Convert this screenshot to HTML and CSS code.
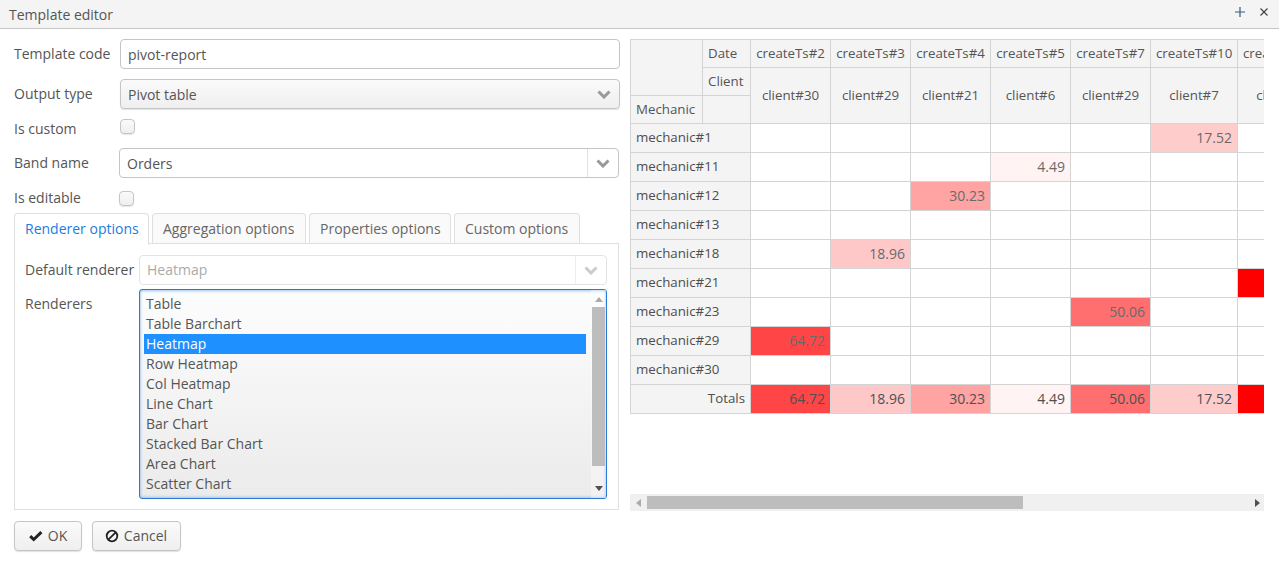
FILE: index.html
```html
<!DOCTYPE html>
<html>
<head>
  <meta charset="utf-8">
  <title>Template editor</title>
  <link rel="stylesheet" href="styles.css">
</head>
<body>
  <header class="window-header">
    <span class="window-title">Template editor</span>
    <span class="window-actions">
      <svg class="icon-plus" width="10" height="10" viewBox="0 0 10 10"><path d="M5 0v10M0 5h10"/></svg>
      <svg class="icon-close" width="10" height="10" viewBox="0 0 10 10"><path d="M1.5 1.5l7 7M8.5 1.5l-7 7"/></svg>
    </span>
  </header>

  <main class="window-body">
    <section class="editor">
      <div class="form-row row-input">
        <label class="label">Template code</label>
        <div class="field">pivot-report</div>
      </div>
      <div class="form-row row-input">
        <label class="label">Output type</label>
        <div class="field field-native">
          <span class="grow">Pivot table</span>
          <svg class="chevron" width="14" height="9" viewBox="0 0 14 9"><path d="M1.5 1.5L7 7l5.500-5.500"/></svg>
        </div>
      </div>
      <div class="form-row row-check row-custom">
        <label class="label">Is custom</label>
        <span class="checkbox"></span>
      </div>
      <div class="form-row row-input row-band">
        <label class="label">Band name</label>
        <div class="field field-combo">
          <span class="grow">Orders</span>
          <span class="combo-btn">
            <svg class="chevron" width="14" height="9" viewBox="0 0 14 9"><path d="M1.5 1.5L7 7l5.500-5.500"/></svg>
          </span>
        </div>
      </div>
      <div class="form-row row-check row-editable">
        <label class="label">Is editable</label>
        <span class="checkbox"></span>
      </div>

      <nav class="tabs">
        <span class="tab tab-active">Renderer options</span>
        <span class="tab">Aggregation options</span>
        <span class="tab">Properties options</span>
        <span class="tab">Custom options</span>
      </nav>
      <div class="tab-body">
        <div class="tab-row">
          <label class="tab-label">Default renderer</label>
          <div class="field field-combo field-disabled">
            <span class="grow">Heatmap</span>
            <span class="combo-btn">
              <svg class="chevron" width="14" height="9" viewBox="0 0 14 9"><path d="M1.5 1.5L7 7l5.500-5.500"/></svg>
            </span>
          </div>
        </div>
        <div class="tab-row tab-row-list">
          <label class="tab-label">Renderers</label>
          <div class="listbox">
            <ul class="options">
              <li>Table</li>
              <li>Table Barchart</li>
              <li class="selected">Heatmap</li>
              <li>Row Heatmap</li>
              <li>Col Heatmap</li>
              <li>Line Chart</li>
              <li>Bar Chart</li>
              <li>Stacked Bar Chart</li>
              <li>Area Chart</li>
              <li>Scatter Chart</li>
            </ul>
            <div class="vscroll">
              <span class="arrow-up"></span>
              <span class="vthumb"></span>
              <span class="arrow-down"></span>
            </div>
          </div>
        </div>
      </div>

      <div class="buttons">
        <button class="btn btn-ok">
          <svg class="btn-icon" width="14" height="14" viewBox="0 0 14 14"><path class="icon-check" d="M1.200 7.200l3.500 3.300 7.700-7.300"/></svg>
          OK
        </button>
        <button class="btn btn-cancel">
          <svg class="btn-icon" width="14" height="14" viewBox="0 0 14 14"><circle class="icon-ban" cx="7" cy="7" r="5.300"/><path class="icon-ban" d="M3.300 10.700l7.400-7.400"/></svg>
          Cancel
        </button>
      </div>
    </section>

    <section class="report">
      <div class="pivot-wrap">
        <table class="pivot">
          <colgroup>
            <col class="c-axis"><col class="c-attr">
            <col class="c-val"><col class="c-val"><col class="c-val"><col class="c-val"><col class="c-val">
            <col class="c-wide"><col class="c-wide">
          </colgroup>
          <thead>
            <tr>
              <th rowspan="2"></th>
              <th class="left">Date</th>
              <th>createTs#2</th><th>createTs#3</th><th>createTs#4</th><th>createTs#5</th><th>createTs#7</th><th>createTs#10</th><th>createTs#11</th>
            </tr>
            <tr>
              <th class="left">Client</th>
              <th rowspan="2">client#30</th><th rowspan="2">client#29</th><th rowspan="2">client#21</th><th rowspan="2">client#6</th><th rowspan="2">client#29</th><th rowspan="2">client#7</th><th rowspan="2">client#2</th>
            </tr>
            <tr>
              <th class="left">Mechanic</th>
              <th></th>
            </tr>
          </thead>
          <tbody>
            <tr><th class="left" colspan="2">mechanic#1</th><td></td><td></td><td></td><td></td><td></td><td class="heat-17">17.52</td><td></td></tr>
            <tr><th class="left" colspan="2">mechanic#11</th><td></td><td></td><td></td><td class="heat-4">4.49</td><td></td><td></td><td></td></tr>
            <tr><th class="left" colspan="2">mechanic#12</th><td></td><td></td><td class="heat-30">30.23</td><td></td><td></td><td></td><td></td></tr>
            <tr><th class="left" colspan="2">mechanic#13</th><td></td><td></td><td></td><td></td><td></td><td></td><td></td></tr>
            <tr><th class="left" colspan="2">mechanic#18</th><td></td><td class="heat-18">18.96</td><td></td><td></td><td></td><td></td><td></td></tr>
            <tr><th class="left" colspan="2">mechanic#21</th><td></td><td></td><td></td><td></td><td></td><td></td><td class="heat-max"></td></tr>
            <tr><th class="left" colspan="2">mechanic#23</th><td></td><td></td><td></td><td></td><td class="heat-50">50.06</td><td></td><td></td></tr>
            <tr><th class="left" colspan="2">mechanic#29</th><td class="heat-64">64.72</td><td></td><td></td><td></td><td></td><td></td><td></td></tr>
            <tr><th class="left" colspan="2">mechanic#30</th><td></td><td></td><td></td><td></td><td></td><td></td><td></td></tr>
            <tr class="totals"><th class="right" colspan="2">Totals</th><td class="heat-64">64.72</td><td class="heat-18">18.96</td><td class="heat-30">30.23</td><td class="heat-4">4.49</td><td class="heat-50">50.06</td><td class="heat-17">17.52</td><td class="heat-max"></td></tr>
          </tbody>
        </table>
      </div>
      <div class="hscroll">
        <span class="arrow-left"></span>
        <span class="hthumb"></span>
        <span class="arrow-right"></span>
      </div>
    </section>
  </main>
</body>
</html>
```

FILE: styles.css
```css
html, body {
  height: 100%;
  margin: 0;
}
body {
  background: #fff;
  color: #555;
  font-family: "Open Sans", sans-serif;
  font-size: 14px;
  overflow: hidden;
}

/* window chrome */
.window-header {
  display: flex;
  align-items: center;
  justify-content: space-between;
  height: 28px;
  padding: 0 10px 0 9px;
  background: #f4f4f4;
  border-bottom: 1px solid #c5c5c5;
}
.window-title {
  color: #555;
}
.window-actions {
  display: flex;
  gap: 14px;
  margin-top: -4px;
}
.icon-plus path {
  stroke: #2c5f8a;
  stroke-width: 1.2;
  fill: none;
}
.icon-close path {
  stroke: #444;
  stroke-width: 1.2;
  fill: none;
}

.window-body {
  display: flex;
  padding: 10px 15px 0 14px;
  gap: 10px;
}

/* left form */
.editor {
  width: 606px;
  flex: none;
}
.form-row {
  display: flex;
  margin-bottom: 10px;
}
.row-input {
  align-items: center;
  height: 30px;
}
.row-input .label {
  padding-bottom: 2px;
}
.row-check {
  height: 19px;
}
.row-custom .label {
  line-height: 20px;
}
.row-editable {
  height: 20px;
  margin-bottom: 5px;
  line-height: 20px;
}
.row-editable .checkbox {
  margin-top: 3px;
}
.label {
  width: 106px;
  flex: none;
}
.row-band .label,
.row-editable .label {
  width: 105px;
}
.row-band {
  width: 605px;
}
.field {
  flex: 1;
  display: flex;
  align-items: center;
  height: 30px;
  box-sizing: border-box;
  padding-left: 7px;
  background: #fff;
  border: 1px solid #c5c5c5;
  border-radius: 4px;
}
.field-native {
  background: linear-gradient(#fafafa, #efefef);
  box-shadow: 0 1px 1px rgba(0, 0, 0, .12);
  padding-right: 8px;
}
.grow {
  flex: 1;
}
.field-combo {
  padding-right: 0;
}
.combo-btn {
  display: flex;
  align-items: center;
  justify-content: center;
  width: 30px;
  height: 100%;
  border-left: 1px solid #e2e2e2;
}
.chevron path {
  stroke: #999;
  stroke-width: 3;
  fill: none;
}
.checkbox {
  display: block;
  width: 13px;
  height: 13px;
  background: linear-gradient(#fafafa, #efefef);
  border: 1px solid #c5c5c5;
  border-radius: 4px;
  box-shadow: 0 1px 1px rgba(0, 0, 0, .1);
}

/* tabs */
.tabs {
  display: flex;
  gap: 3px;
  height: 30px;
}
.tab {
  width: 113px;
  padding: 0 10px;
  line-height: 30px;
  white-space: nowrap;
  background: #fafafa;
  color: #666;
  border: 1px solid #dfdfdf;
  border-bottom: 0;
  border-radius: 4px 4px 0 0;
}
.tab:nth-child(2) { width: 132px; }
.tab:nth-child(3) { width: 120px; }
.tab:nth-child(4) { width: 104px; }
.tab-active {
  position: relative;
  z-index: 1;
  height: 31px;
  background: #fff;
  color: #197de1;
}
.tab-body {
  width: 605px;
  height: 267px;
  padding: 11px 11px 0 10px;
  box-sizing: border-box;
  border: 1px solid #dfdfdf;
}
.tab-row {
  display: flex;
  align-items: center;
  margin-bottom: 4px;
}
.tab-row .tab-label {
  padding-bottom: 2px;
}
.tab-row-list {
  align-items: flex-start;
}
.tab-row-list .tab-label {
  line-height: 30px;
  padding-bottom: 0;
}
.tab-label {
  width: 114px;
  flex: none;
}
.field-disabled {
  border-color: #e3e3e3;
  color: #aaa;
}
.field-disabled .grow {
  padding-bottom: 2px;
}
.field-disabled .combo-btn {
  border-left-color: #eee;
}
.field-disabled .chevron path {
  stroke: #ccc;
}

/* renderers list */
.listbox {
  flex: 1;
  display: flex;
  height: 210px;
  box-sizing: border-box;
  background: linear-gradient(#fdfdfd, #ebebeb);
  border: 1px solid #2a7bd6;
  border-radius: 3px;
  box-shadow: inset 0 1px 3px rgba(25, 125, 225, .4), inset 0 -1px 3px rgba(25, 125, 225, .3);
}
.options {
  flex: 1;
  list-style: none;
  margin: 0;
  padding: 4px 5px 0 4px;
}
.options li {
  height: 20px;
  line-height: 20px;
  padding-left: 2px;
}
.options .selected {
  background: #1e90ff;
  color: #fff;
}
.vscroll {
  display: flex;
  flex-direction: column;
  align-items: center;
  width: 15px;
  background: rgba(255, 255, 255, .35);
}
.arrow-up {
  margin: 7px 0 5px;
  border: 4px solid transparent;
  border-top: 0;
  border-bottom: 5px solid #aaa;
}
.vthumb {
  width: 13px;
  height: 159px;
  background: #bdbdbd;
}
.arrow-down {
  margin-top: 20px;
  border: 4px solid transparent;
  border-bottom: 0;
  border-top: 5px solid #505050;
}

/* pivot */
.report {
  flex: 1;
  min-width: 0;
}
.pivot-wrap {
  height: 455px;
  overflow: hidden;
}
.pivot {
  table-layout: fixed;
  width: 694px;
  border-collapse: collapse;
  font-size: 13.3px;
}
.c-axis { width: 72px; }
.c-attr { width: 48px; }
.c-val { width: 80px; }
.c-wide { width: 87px; }
.pivot th,
.pivot td {
  height: 28px;
  padding: 0 5px 2px;
  box-sizing: border-box;
  border: 1px solid #d4d4d4;
  white-space: nowrap;
  overflow: hidden;
}
.pivot th {
  background: #f4f4f4;
  font-weight: 400;
  text-align: center;
}
.pivot tbody th,
.pivot td {
  height: 29px;
}
.pivot tbody th {
  color: #4d4d4d;
}
.pivot .left {
  text-align: left;
}
.pivot .right {
  text-align: right;
}
.pivot td {
  font-size: 14px;
  color: #6a6a6a;
  text-align: right;
}
.heat-4 { background: #fff3f3; }
.heat-17 { background: #ffcccc; }
.heat-18 { background: #ffc8c8; }
.heat-30 { background: #ffa3a3; }
.heat-50 { background: #ff6f6f; }
.heat-64 { background: #ff4545; }
.heat-max { background: #ff0000; }
.pivot .totals td {
  color: #505050;
}

.hscroll {
  display: flex;
  align-items: center;
  height: 17px;
  background: #f0f0f0;
}
.hthumb {
  width: 376px;
  height: 13px;
  margin-left: 6px;
  background: #bdbdbd;
}
.arrow-left {
  margin-left: 6px;
  border: 4px solid transparent;
  border-left: 0;
  border-right: 5px solid #aaa;
}
.arrow-right {
  margin-left: auto;
  margin-right: 4px;
  border: 4px solid transparent;
  border-right: 0;
  border-left: 5px solid #505050;
}

/* dialog buttons */
.buttons {
  display: flex;
  gap: 10px;
  margin-top: 11px;
}
.btn {
  display: flex;
  align-items: center;
  justify-content: center;
  gap: 5px;
  height: 30px;
  padding: 0 0 2px;
  color: #555;
  font: inherit;
  background: linear-gradient(#fafafa, #efefef);
  border: 1px solid #c5c5c5;
  border-radius: 4px;
  box-shadow: 0 1px 1px rgba(0, 0, 0, .12);
}
.btn-ok {
  width: 68px;
}
.btn-cancel {
  width: 89px;
}
.btn-icon {
  margin-top: 2px;
}
.btn-cancel .btn-icon {
  margin-left: -1px;
}
.icon-check {
  stroke: #222;
  stroke-width: 3;
  fill: none;
}
.icon-ban {
  stroke: #222;
  stroke-width: 1.800;
  fill: none;
}
```
